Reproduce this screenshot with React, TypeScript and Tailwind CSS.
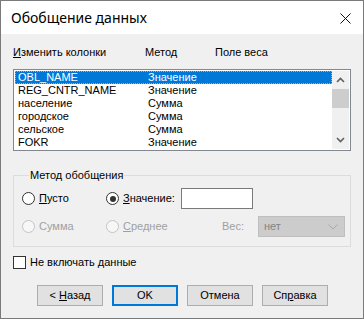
import React from "react";

const rows = [
  ["OBL_NAME", "Значение"],
  ["REG_CNTR_NAME", "Значение"],
  ["население", "Сумма"],
  ["городское", "Сумма"],
  ["сельское", "Сумма"],
  ["FOKR", "Значение"],
];

function Radio({ checked, disabled }: { checked?: boolean; disabled?: boolean }) {
  return (
    <span
      className={
        "flex h-[13px] w-[13px] items-center justify-center rounded-full border " +
        (disabled ? "border-[#c4c4c4] bg-[#f7f7f7]" : "border-[#333333] bg-white")
      }
    >
      {checked && <span className="h-[6px] w-[6px] rounded-full bg-[#333333]" />}
    </span>
  );
}

function Btn({ children, primary }: { children: React.ReactNode; primary?: boolean }) {
  return (
    <div
      className={
        "flex h-[21px] w-[66px] items-center justify-center bg-[#e1e1e1] " +
        (primary ? "border-2 border-[#0078d7]" : "border border-[#adadad]")
      }
    >
      {children}
    </div>
  );
}

export default function App() {
  return (
    <div
      className="flex h-[319px] w-[364px] flex-col border border-[#7a7a7a] bg-[#f0f0f0] text-[11px] leading-[13px] text-black"
      style={{ fontFamily: '"Liberation Sans", Arial, sans-serif' }}
    >
      <div className="flex h-[33px] items-center justify-between bg-white pl-[10px] pr-[12px]">
        <span className="text-[14px] text-[#000]" style={{ fontFamily: '"Noto Sans", sans-serif' }}>
          Обобщение данных
        </span>
        <svg width="11" height="11" viewBox="0 0 11 11" className="mt-[1px]">
          <path d="M0.5 0.5 L10.5 10.5 M10.5 0.5 L0.5 10.5" stroke="#111" strokeWidth="1" />
        </svg>
      </div>

      <div className="flex flex-col pl-[12px]">
        <div className="mt-[12px] flex h-[13px]">
          <span className="w-[132px]">
            <span className="underline">И</span>зменить колонки
          </span>
          <span className="w-[70px]">Метод</span>
          <span>Поле веса</span>
        </div>

        <div className="mt-[10px] flex h-[82px] w-[338px] border border-[#828790] bg-white p-[1px]">
          <div className="flex flex-1 flex-col">
            {rows.map(([name, method], i) => (
              <div
                key={name}
                className={
                  "flex h-[13px] items-center " +
                  (i === 0
                    ? "border border-dotted border-[#f0a040] bg-[#0078d7] pl-[2px] text-white"
                    : "pl-[3px]")
                }
              >
                <span className="w-[130px]">{name}</span>
                <span>{method}</span>
              </div>
            ))}
          </div>
          <div className="flex w-[17px] flex-col items-center bg-[#f0f0f0]">
            <div className="flex h-[18px] items-center justify-center">
              <svg width="9" height="6" viewBox="0 0 9 6">
                <path d="M1 5 L4.5 1.5 L8 5" fill="none" stroke="#606060" strokeWidth="1.6" />
              </svg>
            </div>
            <div className="h-[19px] w-[17px] bg-[#cdcdcd]" />
            <div className="flex-1" />
            <div className="flex h-[18px] items-center justify-center">
              <svg width="9" height="6" viewBox="0 0 9 6">
                <path d="M1 1 L4.5 4.5 L8 1" fill="none" stroke="#606060" strokeWidth="1.6" />
              </svg>
            </div>
          </div>
        </div>

        <fieldset className="mt-[18px] w-[338px] border border-[#dcdcdc] pb-[9px] pl-[8px]">
          <legend className="ml-[7px] px-[1px]">Метод обобщения</legend>
          <div className="mt-[6px] flex h-[21px] items-center">
            <div className="flex w-[84px] items-center gap-[4px]">
              <Radio />
              <span>
                <span className="underline">П</span>усто
              </span>
            </div>
            <div className="flex w-[75px] items-center gap-[4px]">
              <Radio checked />
              <span>
                <span className="underline">З</span>начение:
              </span>
            </div>
            <div className="h-[21px] w-[72px] border border-[#7a7a7a] bg-white" />
          </div>
          <div className="mt-[7px] flex h-[21px] items-center text-[#a0a0a0]">
            <div className="flex w-[84px] items-center gap-[4px]">
              <Radio disabled />
              <span>Сумма</span>
            </div>
            <div className="flex w-[116px] items-center gap-[4px]">
              <Radio disabled />
              <span>
                <span className="underline">С</span>реднее
              </span>
            </div>
            <span className="w-[36px]">Вес:</span>
            <div className="flex h-[21px] w-[87px] items-center justify-between border border-[#bfbfbf] bg-[#cccccc] pl-[5px] pr-[6px] text-[#838383]">
              <span>нет</span>
              <svg width="10" height="6" viewBox="0 0 10 6">
                <path d="M0.5 0.5 L5 5 L9.5 0.5" fill="none" stroke="#a8a8a8" strokeWidth="1" />
              </svg>
            </div>
          </div>
        </fieldset>

        <div className="mt-[9px] flex h-[13px] items-center gap-[4px]">
          <span className="h-[13px] w-[13px] border border-[#333333] bg-white" />
          <span>
            Не включать <span className="underline">д</span>анные
          </span>
        </div>
      </div>

      <div className="mt-[16px] flex gap-[9px] pl-[36px]">
        <Btn>
          <span>
            &lt; <span className="underline">Н</span>азад
          </span>
        </Btn>
        <Btn primary>OK</Btn>
        <Btn>Отмена</Btn>
        <Btn>
          <span>
            Сп<span className="underline">р</span>авка
          </span>
        </Btn>
      </div>
    </div>
  );
}
